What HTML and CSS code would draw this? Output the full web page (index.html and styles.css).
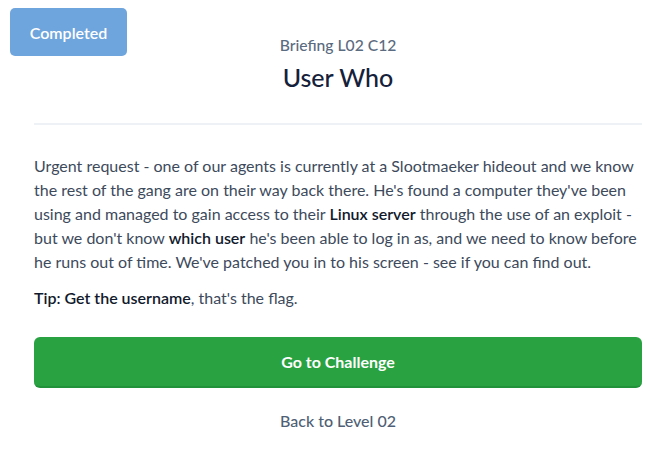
FILE: index.html
```html
<!DOCTYPE html>
<html>
<head>
<meta charset="utf-8">
<link rel="stylesheet" href="styles.css">
</head>
<body>
<div class="page">
  <span class="completed">Completed</span>
  <header class="head">
    <div class="kicker">Briefing L02 C12</div>
    <h1 class="title">User Who</h1>
  </header>
  <hr class="divider">
  <p class="body">Urgent request - one of our agents is currently at a Slootmaeker hideout and we know the rest of the gang are on their way back there. He's found a computer they've been using and managed to gain access to their <strong>Linux server</strong> through the use of an exploit - but we don't know <strong>which user</strong> he's been able to log in as, and we need to know before he runs out of time. We've patched you in to his screen - see if you can find out.</p>
  <p class="tip"><strong>Tip: Get the username</strong>, that's the flag.</p>
  <a class="go" href="#">Go to Challenge</a>
  <a class="back" href="#">Back to Level 02</a>
</div>
</body>
</html>
```
FILE: styles.css
```css
html, body {
  margin: 0;
  padding: 0;
  background: #ffffff;
}
body {
  font-family: Lato, "Open Sans", sans-serif;
  color: #3d4a5c;
}
.page {
  position: relative;
  padding: 0 20px 0 34px;
  display: flex;
  flex-direction: column;
}
.completed {
  position: absolute;
  left: 10px;
  top: 8px;
  width: 117px;
  height: 48px;
  display: flex;
  align-items: center;
  justify-content: center;
  background: #6fa5dd;
  color: #ffffff;
  border-radius: 5px;
  font-size: 16px;
  font-weight: 600;
}
.head {
  text-align: center;
  padding-top: 35px;
}
.kicker {
  font-size: 15.7px;
  font-weight: 500;
  color: #5b6b80;
  line-height: 20px;
}
.title {
  margin: 7px 0 0;
  font-size: 25px;
  font-weight: 500;
  color: #15213a;
  line-height: 30px;
}
.divider {
  margin: 31px 0 0;
  border: 0;
  height: 2px;
  background: #eef1f5;
}
.body {
  margin: 29px 0 0;
  font-size: 16px;
  line-height: 24px;
  color: #3d4a5c;
}
.body strong, .tip strong {
  font-weight: 600;
  color: #111a2c;
}
.tip {
  margin: 12px 0 0;
  font-size: 16px;
  line-height: 24px;
}
.go {
  margin-top: 27px;
  height: 49px;
  display: flex;
  align-items: center;
  justify-content: center;
  background: #29a241;
  border-bottom: 2px solid #22923a;
  border-radius: 6px;
  color: #ffffff;
  font-size: 16px;
  font-weight: 700;
  text-decoration: none;
}
.back {
  margin-top: 23px;
  text-align: center;
  font-size: 16px;
  font-weight: 500;
  color: #4f5f75;
  text-decoration: none;
  line-height: 20px;
}
```
